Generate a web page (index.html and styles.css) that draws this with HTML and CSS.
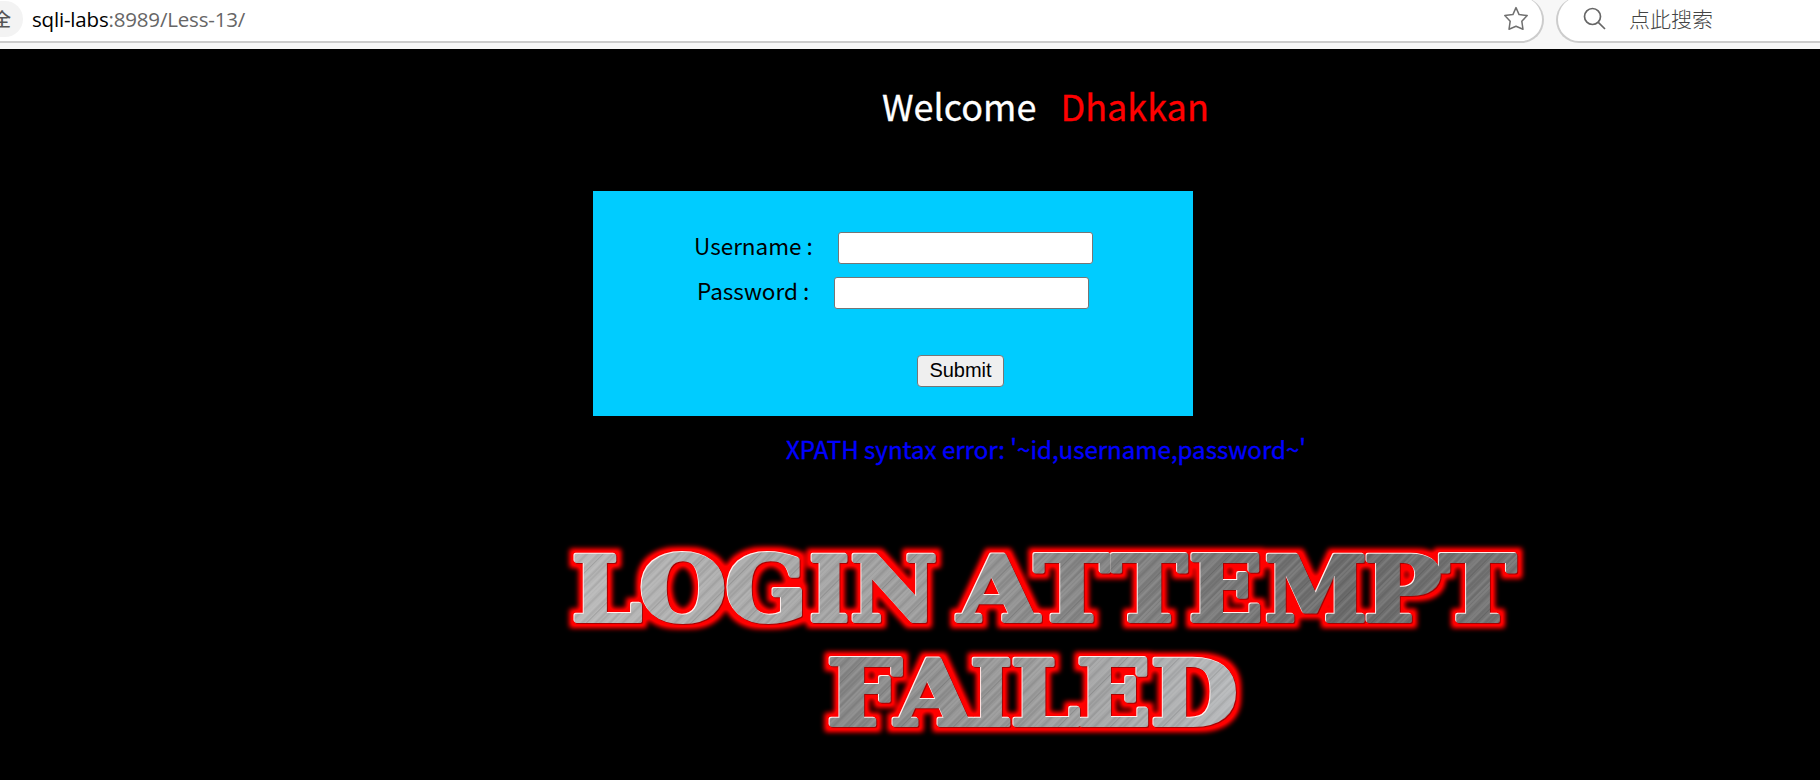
FILE: index.html
```html
<!DOCTYPE html>
<html lang="zh-CN">
<head>
<meta charset="utf-8">
<title>Less-13</title>
<link rel="stylesheet" href="styles.css">
</head>
<body>
<header class="toolbar">
  <div class="address">
    <span class="badge">全</span>
    <span class="url"><b>sqli-labs</b>:8989/Less-13/</span>
    <svg class="star" width="26" height="26" viewBox="0 0 26 26"><path d="M13 1.6 L16.1 8.6 L24.2 9.6 L18.8 15.2 L20 23.3 L13 20.2 L6 23.3 L7.2 15.2 L1.8 9.6 L9.9 8.6 Z"/></svg>
  </div>
  <div class="search">
    <svg class="lens" width="24" height="24" viewBox="0 0 24 24"><circle cx="9.5" cy="9.5" r="8"/><path d="M15.3 15.3 L22 22"/></svg>
    <span class="hint">点此搜索</span>
  </div>
</header>
<main class="page">
  <div class="welcome"><span>Welcome</span><span class="name">Dhakkan</span></div>
  <form class="login">
    <div class="row user"><label class="lab">Username :</label><input class="field" type="text"></div>
    <div class="row pass"><label class="lab">Password :</label><input class="field" type="text"></div>
    <button class="submit" type="button">Submit</button>
  </form>
  <div class="error">XPATH syntax error: '~id,username,password~'</div>
  <svg class="banner" width="1000" height="220" viewBox="550 530 1000 220">
    <defs>
      <linearGradient id="tone1" x1="0" x2="1"><stop offset="0" stop-color="#bababa"/><stop offset=".38" stop-color="#9c9c9c"/><stop offset=".55" stop-color="#838383"/><stop offset=".8" stop-color="#6c6c6c"/><stop offset="1" stop-color="#777"/></linearGradient>
      <linearGradient id="tone2" gradientUnits="userSpaceOnUse" x1="828" x2="1235" y1="0" y2="0"><stop offset="0" stop-color="#858585"/><stop offset=".5" stop-color="#9c9c9c"/><stop offset="1" stop-color="#b6b8ba"/></linearGradient>
      <pattern id="brush" width="37" height="40" patternUnits="userSpaceOnUse" patternTransform="rotate(45)">
        <path d="M2 0V40M12 0V40M21 0V40M31 0V40" stroke="#fff" stroke-opacity=".16"/>
        <path d="M6 0V40M17.5 0V40M27 0V40M34 0V40" stroke="#000" stroke-opacity=".12"/>
        <path d="M9.500 0V40M36 0V40" stroke="#fff" stroke-opacity=".08" stroke-width="2"/>
        <path d="M14.5 0V40M24 0V40" stroke="#000" stroke-opacity=".06" stroke-width="2"/>
      </pattern>
      <pattern id="steel" x="550" y="530" width="1000" height="220" patternUnits="userSpaceOnUse">
        <rect width="1000" height="110" fill="url(#tone1)"/>
        <g transform="translate(-550 -530)"><rect x="550" y="640" width="1000" height="110" fill="url(#tone2)"/></g>
        <rect width="1000" height="220" fill="url(#brush)"/>
      </pattern>
      <filter id="glow" filterUnits="userSpaceOnUse" x="550" y="530" width="1000" height="220" color-interpolation-filters="sRGB">
        <feMorphology in="SourceAlpha" operator="dilate" radius="5" result="fat"/>
        <feGaussianBlur in="fat" stdDeviation="2.6" result="soft"/>
        <feComponentTransfer in="soft" result="strong"><feFuncA type="linear" slope="1.2"/></feComponentTransfer>
        <feFlood flood-color="#f00"/><feComposite in2="strong" operator="in" result="red"/>
        <feOffset in="SourceAlpha" dx="-1" dy="-1" result="up"/>
        <feFlood flood-color="#fff0ee"/><feComposite in2="up" operator="in" result="light"/>
        <feOffset in="SourceAlpha" dx="1" dy="1" result="down"/>
        <feFlood flood-color="#500" flood-opacity=".5"/><feComposite in2="down" operator="in" result="shade"/>
        <feMerge><feMergeNode in="red"/><feMergeNode in="shade"/><feMergeNode in="light"/><feMergeNode in="SourceGraphic"/></feMerge>
      </filter>
    </defs>
    <g class="metal" filter="url(#glow)">
      <text y="621"><tspan x="572" textLength="70" lengthAdjust="spacingAndGlyphs">L</tspan><tspan x="639.500" textLength="87" lengthAdjust="spacingAndGlyphs">O</tspan><tspan x="725.500" textLength="82" lengthAdjust="spacingAndGlyphs">G</tspan><tspan x="809.500" textLength="40" lengthAdjust="spacingAndGlyphs">I</tspan><tspan x="850.500" textLength="87" lengthAdjust="spacingAndGlyphs">N</tspan> <tspan x="958.500" textLength="80" lengthAdjust="spacingAndGlyphs">A</tspan><tspan x="1034.500" textLength="75" lengthAdjust="spacingAndGlyphs">T</tspan><tspan x="1112" textLength="75" lengthAdjust="spacingAndGlyphs">T</tspan><tspan x="1189" textLength="74" lengthAdjust="spacingAndGlyphs">E</tspan><tspan x="1265" textLength="102" lengthAdjust="spacingAndGlyphs">M</tspan><tspan x="1364" textLength="77" lengthAdjust="spacingAndGlyphs">P</tspan><tspan x="1440" textLength="76" lengthAdjust="spacingAndGlyphs">T</tspan></text>
      <text y="724.5"><tspan x="827" textLength="75" lengthAdjust="spacingAndGlyphs">F</tspan><tspan x="895.500" textLength="77" lengthAdjust="spacingAndGlyphs">A</tspan><tspan x="970.500" textLength="42" lengthAdjust="spacingAndGlyphs">I</tspan><tspan x="1011" textLength="69" lengthAdjust="spacingAndGlyphs">L</tspan><tspan x="1077" textLength="74" lengthAdjust="spacingAndGlyphs">E</tspan><tspan x="1151" textLength="87" lengthAdjust="spacingAndGlyphs">D</tspan></text>
    </g>
  </svg>
</main>
</body>
</html>
```
FILE: styles.css
```css
* { box-sizing: border-box; }
body { margin: 0; width: 1820px; height: 780px; overflow: hidden; background: #000; font-family: "Noto Sans CJK SC", sans-serif; }
.toolbar { display: flex; gap: 12px; height: 49px; background: #f7f7f7; overflow: hidden; }
.address { display: flex; align-items: center; width: 1544px; height: 46px; margin-top: -3px; padding-right: 13px; background: #fff; border: 1px solid #ccc; border-width: 0 2px 2px 0; border-radius: 0 23px 23px 0; }
.badge { width: 23px; height: 36px; padding-right: 12px; border-radius: 0 18px 18px 0; background: #f3f3f3; color: #555; font-size: 18px; font-weight: 500; line-height: 35px; display: flex; justify-content: flex-end; }
.url { margin: 0 0 0 9px; color: #666; font: 20.5px/36px "Open Sans", sans-serif; letter-spacing: -.18px; white-space: nowrap; }
.url b { color: #000; font-weight: 400; }
.star { margin-left: auto; fill: none; stroke: #707070; stroke-width: 1.5; stroke-linejoin: round; }
.search { display: flex; align-items: center; flex: 1; height: 46px; margin-top: -3px; padding-left: 25px; background: #fff; border: 2px solid #ccc; border-width: 0 0 2px 2px; border-radius: 23px 0 0 23px; }
.lens { fill: none; stroke: #666; stroke-width: 1.7; }
.hint { margin: -2px 0 0 22px; color: #444; font-size: 21px; font-weight: 300; line-height: 36px; }
.page { height: 731px; padding-top: 26px; }
.welcome { display: flex; gap: 24px; height: 60px; padding-left: 882px; color: #fff; font-size: 36px; line-height: 60px; white-space: nowrap; -webkit-text-stroke: .3px; }
.name { color: #f00; }
.login { width: 600px; height: 225px; margin: 56px 0 0 593px; padding-top: 41px; background: #0cf; font-size: 22.5px; }
.row { display: flex; height: 32px; margin-bottom: 13px; line-height: 27px; }
.user { padding-left: 101px; }
.pass { padding-left: 104px; }
.lab { width: 144px; white-space: nowrap; }
.pass .lab { width: 137px; }
.field { width: 255px; height: 32px; border: 1px solid #767676; border-radius: 3px; background: #fff; }
.submit { display: block; width: 87px; height: 32px; margin: 46px 0 0 324px; padding: 0 0 2px; border: 1px solid #767676; border-radius: 4px; background: #efefef; color: #000; font: 20px/28px "Liberation Sans", sans-serif; }
.error { height: 40px; margin: 13px 0 0 786px; color: #00f; font-size: 24.05px; line-height: 40px; white-space: nowrap; -webkit-text-stroke: .35px; }
.banner { display: block; margin: 61px 0 0 550px; }
.metal { font: bold 90px "DejaVu Serif", serif; fill: url(#steel); stroke: url(#steel); stroke-width: 4; stroke-linejoin: round; }
```
